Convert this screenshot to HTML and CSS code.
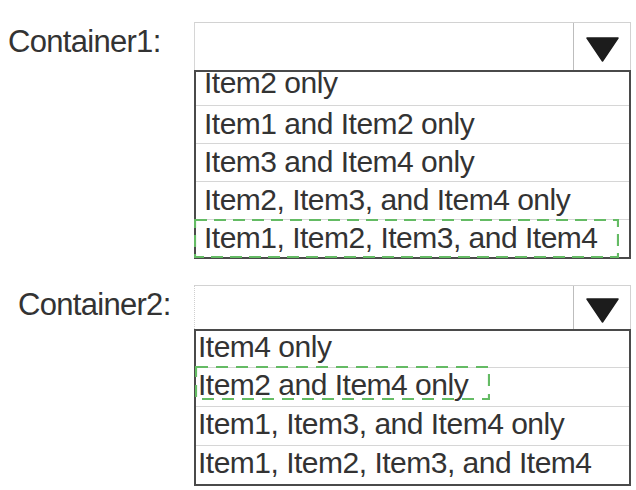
FILE: index.html
```html
<!DOCTYPE html>
<html lang="en">
<head>
<meta charset="utf-8">
<title>Containers</title>
<link rel="stylesheet" href="styles.css">
</head>
<body>
<div class="page">
  <section class="group">
    <div class="label">Container1:</div>
    <div class="select select-a">
      <div class="select-field"></div>
      <div class="select-arrow">
        <svg class="tri" width="33" height="25" viewBox="0 0 33 25"><polygon points="1,1 32,1 16.5,24" fill="#1c1c1c" stroke="#1c1c1c" stroke-width="1.5" stroke-linejoin="round"/></svg>
      </div>
    </div>
    <div class="list list-a">
      <div class="row">Item2 only</div>
      <div class="row">Item1 and Item2 only</div>
      <div class="row">Item3 and Item4 only</div>
      <div class="row">Item2, Item3, and Item4 only</div>
      <div class="row">Item1, Item2, Item3, and Item4
        <svg class="pick pick-a" width="425" height="39" viewBox="0 0 425 39"><rect x="1" y="1" width="423" height="37" fill="none" stroke="#64bb64" stroke-width="2.2" stroke-dasharray="12 7"/></svg>
      </div>
    </div>
  </section>
  <section class="group group-b">
    <div class="label label-b">Container2:</div>
    <div class="select select-b">
      <div class="select-field"></div>
      <div class="select-arrow">
        <svg class="tri" width="33" height="25" viewBox="0 0 33 25"><polygon points="1,1 32,1 16.5,24" fill="#1c1c1c" stroke="#1c1c1c" stroke-width="1.5" stroke-linejoin="round"/></svg>
      </div>
    </div>
    <div class="list list-b">
      <div class="row">Item4 only</div>
      <div class="row">Item2 and Item4 only
        <svg class="pick pick-b" width="295" height="34" viewBox="0 0 295 34"><rect x="1" y="1" width="293" height="32" fill="none" stroke="#64bb64" stroke-width="2.2" stroke-dasharray="12 8"/></svg>
      </div>
      <div class="row">Item1, Item3, and Item4 only</div>
      <div class="row">Item1, Item2, Item3, and Item4</div>
    </div>
  </section>
</div>
</body>
</html>
```
FILE: styles.css
```css
html, body {
  margin: 0;
  padding: 0;
  background: #ffffff;
}

body {
  font-family: "Liberation Sans", Arial, sans-serif;
  color: #333333;
}

.page {
  width: 636px;
  height: 490px;
  padding-top: 22px;
  box-sizing: border-box;
  overflow: hidden;
}

.group {
  display: grid;
  grid-template-columns: 194px 437px;
}

.group-b {
  margin-top: 26px;
}

.label {
  grid-column: 1;
  grid-row: 1;
  font-size: 31px;
  letter-spacing: -0.7px;
  line-height: 40px;
  padding-left: 8px;
  white-space: nowrap;
}

.label-b {
  padding-left: 18px;
}

.select {
  grid-column: 2;
  grid-row: 1;
  display: flex;
  box-sizing: border-box;
  height: 48px;
  border-top: 1px solid #d2d2d2;
  border-left: 1px solid #d6d6d6;
  border-right: 1px solid #d2d2d2;
}

.select-b {
  height: 44px;
  border-left: 1px dotted #cfcfcf;
}

.select-field {
  flex: 1;
}

.select-arrow {
  width: 57px;
  box-sizing: border-box;
  border-left: 1px solid #bdbdbd;
  display: flex;
  align-items: center;
  justify-content: center;
  padding-top: 6px;
}

.tri {
  display: block;
}

.list {
  grid-column: 2;
  grid-row: 2;
  border: 2px solid #4a4a4a;
  font-size: 30px;
  letter-spacing: -0.5px;
  white-space: nowrap;
}

.row {
  position: relative;
  box-sizing: border-box;
  height: 38px;
  line-height: 35px;
  border-top: 1px solid #d6d6d6;
  padding-left: 8px;
}

.row:first-child {
  border-top: 0;
  height: 33px;
  line-height: 21px;
}

.list-b .row {
  height: 39px;
  line-height: 34px;
  padding-left: 2px;
}

.list-b .row:first-child {
  height: 36px;
  line-height: 31px;
}

.pick {
  position: absolute;
  display: block;
}

.pick-a {
  left: -2px;
  top: -1px;
}

.pick-b {
  left: -1px;
  top: -2px;
}
```
